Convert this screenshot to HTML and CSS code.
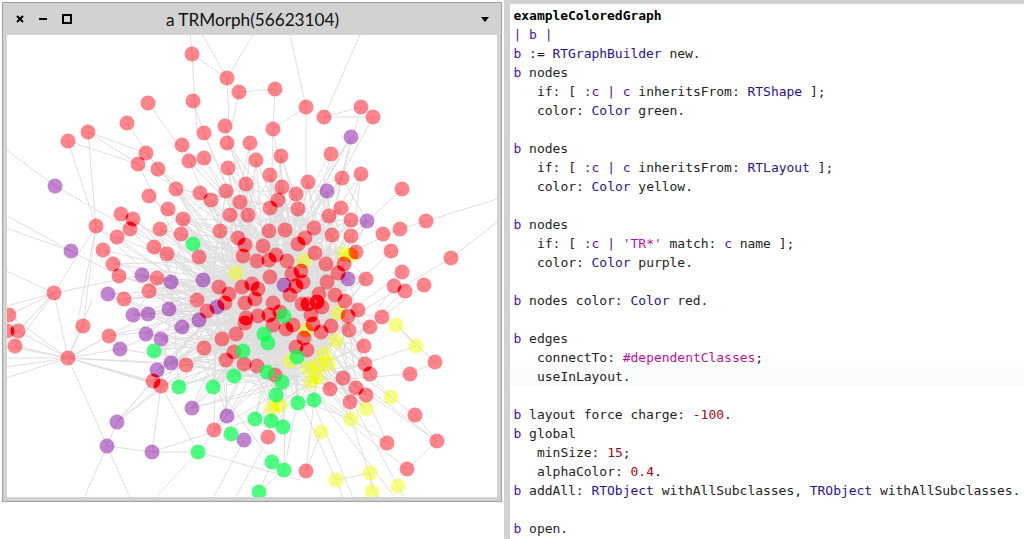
FILE: index.html
```html
<!DOCTYPE html>
<html lang="en">
<head>
<meta charset="utf-8">
<title>exampleColoredGraph</title>
<link rel="stylesheet" href="styles.css">
</head>
<body>
<div class="desk">
  <section class="window">
    <header class="titlebar">
      <div class="controls">
        <svg class="ctl" width="8" height="8" viewBox="0 0 8 8"><path d="M1 1L7 7M7 1L1 7" stroke="#000" stroke-width="2" fill="none"/></svg>
        <svg class="ctl" width="8" height="8" viewBox="0 0 8 8"><path d="M0 4H8" stroke="#000" stroke-width="2" fill="none"/></svg>
        <svg class="ctl" width="10" height="10" viewBox="0 0 10 10"><rect x="1" y="1" width="8" height="8" stroke="#000" stroke-width="2" fill="none"/></svg>
      </div>
      <div class="title">a TRMorph(56623104)</div>
      <div class="menu"><svg width="8" height="5" viewBox="0 0 8 5"><path d="M0 0H8L4 5Z" fill="#000"/></svg></div>
    </header>
    <div class="canvas">
      <svg id="graph" class="graph" width="490" height="462" viewBox="7 35 490 462">
        <defs>
          <filter id="overlap" filterUnits="userSpaceOnUse" x="7" y="35" width="490" height="462" color-interpolation-filters="sRGB">
            <feComponentTransfer><feFuncA type="table" tableValues="0 0.24 0.48 1 1"/></feComponentTransfer>
          </filter>
        </defs>
      </svg>
    </div>
  </section>
  <section class="pane">
    <div class="topband"></div>
    <div class="code">
      <div class="ln"><b>exampleColoredGraph</b></div>
      <div class="ln v">| b |</div>
      <div class="ln"><span class="v">b</span><span> := </span><span class="k">RTGraphBuilder</span><span> new.</span></div>
      <div class="ln"><span class="v">b</span><span> nodes</span></div>
      <div class="ln in"><span>if: [ </span><span class="v">:c | c</span><span> inheritsFrom: </span><span class="k">RTShape</span><span> ];</span></div>
      <div class="ln in"><span>color: </span><span class="k">Color</span><span> green.</span></div>
      <div class="ln"></div>
      <div class="ln"><span class="v">b</span><span> nodes</span></div>
      <div class="ln in"><span>if: [ </span><span class="v">:c | c</span><span> inheritsFrom: </span><span class="k">RTLayout</span><span> ];</span></div>
      <div class="ln in"><span>color: </span><span class="k">Color</span><span> yellow.</span></div>
      <div class="ln"></div>
      <div class="ln"><span class="v">b</span><span> nodes</span></div>
      <div class="ln in"><span>if: [ </span><span class="v">:c |</span><span> </span><span class="s">'TR*'</span><span> match: </span><span class="v">c</span><span> name ];</span></div>
      <div class="ln in"><span>color: </span><span class="k">Color</span><span> purple.</span></div>
      <div class="ln"></div>
      <div class="ln"><span class="v">b</span><span> nodes color: </span><span class="k">Color</span><span> red.</span></div>
      <div class="ln"></div>
      <div class="ln"><span class="v">b</span><span> edges</span></div>
      <div class="ln in"><span>connectTo: </span><span class="s">#dependentClasses</span><span>;</span></div>
      <div class="ln in cur">useInLayout.</div>
      <div class="ln"></div>
      <div class="ln"><span class="v">b</span><span> layout force charge: </span><span class="n">-100</span><span>.</span></div>
      <div class="ln"><span class="v">b</span><span> global</span></div>
      <div class="ln in"><span>minSize: </span><span class="n">15</span><span>;</span></div>
      <div class="ln in"><span>alphaColor: </span><span class="n">0.4</span><span>.</span></div>
      <div class="ln"><span class="v">b</span><span> addAll: </span><span class="k">RTObject</span><span> withAllSubclasses, </span><span class="k">TRObject</span><span> withAllSubclasses.</span></div>
      <div class="ln"></div>
      <div class="ln"><span class="v">b</span><span> open.</span></div>
    </div>
  </section>
</div>
<script src="graph.js"></script>
</body>
</html>
```
FILE: styles.css
```css
html, body { margin: 0; padding: 0; background: #fff; }
body { width: 1024px; height: 539px; overflow: hidden; }
.desk { display: flex; align-items: flex-start; height: 539px; padding: 2px 0 0 2px; box-sizing: border-box; }
.window { width: 500px; height: 500px; box-sizing: border-box; border: 1px solid #a0a0a0; background: #d2d2d2; padding: 0 4px 4px 4px; display: flex; flex-direction: column; flex: none; }
.titlebar { height: 32px; display: grid; grid-template-columns: 1fr auto 1fr; align-items: center; margin: 0 -4px; padding: 0 12px 0 13px; }
.controls { display: flex; align-items: center; gap: 15px; }
.ctl { display: block; }
.title { font: 17.2px "Lato", "Noto Sans", sans-serif; color: #111; white-space: nowrap; }
.menu { display: flex; justify-content: flex-end; }
.menu svg { display: block; }
.canvas { flex: 1; background: #fff; overflow: hidden; }
.graph { display: block; }
.edges { stroke: #dfdfdf; stroke-width: 1; fill: none; }
.nodes { filter: url(#overlap); }
.red { fill: rgb(255, 0, 16); fill-opacity: .5; }
.purple { fill: rgb(128, 0, 160); fill-opacity: .5; }
.yellow { fill: rgb(240, 255, 0); fill-opacity: .5; }
.green { fill: rgb(0, 255, 74); fill-opacity: .7; }
.pane { flex: 1; margin: -2px 0 0 2px; height: 539px; border-left: 6px solid #d2d2d2; display: flex; flex-direction: column; }
.topband { height: 4px; background: #d2d2d2; flex: none; }
.code { padding-top: 2px; font: 13px/19px "DejaVu Sans Mono", "Liberation Mono", monospace; letter-spacing: -0.03px; color: #222; flex: 1; }
.ln { height: 19px; padding-left: 3.5px; white-space: pre; }
.in { padding-left: 27px; }
.code b { color: #000; }
.v { color: #4a10b0; }
.k { color: #2c0f98; }
.s { color: #c0109a; }
.n { color: #a00a20; }
.cur { background: #fafbfd; }
```
FILE: graph.js
```js
var NS = "http://www.w3.org/2000/svg";
var N = {
 red: [[192,54],[227,78],[239,92],[193,101],[148,103],[127,123],[88,132],[225,126],[204,133],[275,89],[306,107],[324,117],[361,107],[373,117],[273,129],
 [68,141],[146,153],[138,164],[158,169],[182,145],[189,161],[204,158],[227,143],[250,143],[228,168],[176,189],[149,196],[200,193],[211,200],[226,191],[240,202],[246,184],[168,209],[121,214],[133,219],[130,229],[183,219],[160,229],[181,234],[230,215],[248,215],[220,231],[96,226],[117,237],[103,250],[154,247],[167,254],[199,257],[238,238],[245,245],[243,256],[113,264],[119,276],[157,278],[149,291],[219,287],[242,287],[229,294],[197,300],[207,311],[225,303],[245,303],[124,299],[54,293],[9,315],[83,326],[246,318],
 [281,156],[256,160],[331,154],[270,175],[308,182],[282,187],[296,194],[342,178],[361,174],[402,189],[278,200],[270,208],[298,209],[341,208],[329,216],[351,220],[426,221],[400,229],[383,234],[269,231],[285,230],[314,228],[332,235],[351,236],[305,238],[298,244],[263,246],[391,251],[356,252],[315,253],[276,255],[257,261],[269,260],[287,261],[326,264],[451,258],[344,264],[402,272],[292,274],[301,271],[338,273],[366,279],[270,277],[303,282],[327,282],[296,286],[394,286],[405,291],[424,285],[252,284],[258,289],[290,295],[319,294],[335,295],[255,299],[273,303],[317,302],[308,304],[302,304],[345,301],[322,307],[280,312],[358,310],[258,316],[269,315],[311,315],[382,317],[348,316],
 [109,336],[18,331],[7,331],[15,346],[68,358],[153,381],[161,386],[186,365],[204,348],[222,339],[236,334],[226,360],[234,352],[244,364],[214,430],[245,323],
 [273,325],[286,329],[293,325],[313,324],[321,332],[331,326],[349,330],[370,327],[304,338],[296,347],[307,350],[364,346],[365,364],[370,374],[257,366],[343,378],[275,375],[356,388],[330,389],[366,395],[350,402],[410,374],[435,362],[415,415],[437,441],[387,443],[407,469],[268,437],[306,471]],
 purple: [[351,137],[327,191],[367,221],[348,279],[284,285],[55,186],[71,251],[142,275],[171,282],[203,280],[108,294],[133,315],[148,314],[169,309],[217,307],[199,320],[146,334],[161,339],[182,327],[120,349],[157,370],[171,363],[192,408],[227,416],[117,422],[107,446],[152,452],[244,440]],
 yellow: [[236,273],[304,261],[344,254],[351,255],[338,313],[396,325],[416,346],[336,341],[306,330],[324,354],[329,364],[318,365],[290,361],[308,368],[318,377],[311,382],[280,405],[272,408],[391,397],[366,409],[351,419],[321,432],[336,480],[370,473],[398,486],[372,492]],
 green: [[193,244],[284,316],[154,351],[179,387],[213,387],[234,376],[243,351],[231,434],[198,452],[264,334],[268,343],[297,357],[267,372],[282,382],[276,395],[298,403],[314,400],[255,419],[271,421],[283,427],[272,462],[284,470],[259,492]]
};
var E = [
 [192,54,190,30],[192,54,227,78],[227,78,200,30],[227,78,256,30],[227,78,229,125],[239,92,232,126],[192,54,197,132],[193,101,204,133],[289,30,306,107],[362,30,324,117],[324,117,361,107],[324,117,373,117],[361,107,342,178],[373,117,340,178],[275,89,273,129],[275,89,239,92],[306,107,273,129],[306,107,306,182],[148,103,182,150],[127,123,158,169],[88,132,138,164],[351,137,300,230],[351,137,282,240],[361,174,310,250],
 [0,145,55,186],[55,186,130,229],[68,141,96,226],[88,132,96,226],[68,141,138,164],[88,132,146,153],[0,212,71,251],[0,226,71,251],[71,251,119,276],[96,226,75,335],[96,226,83,326],[96,226,54,293],[54,293,0,308],[54,293,142,275],[0,268,54,293],[54,293,68,358],[54,293,9,315],[54,293,18,331],[54,293,15,346],[54,293,0,350],
 [68,358,0,358],[68,358,0,368],[68,358,0,380],[68,358,0,345],[68,358,9,315],[68,358,18,331],[68,358,15,346],[68,358,153,381],[68,358,155,383],[68,358,161,386],[68,358,120,349],[68,358,146,316],[68,358,83,326],[68,358,109,336],[68,358,92,300],[68,358,107,446],[68,358,171,363],[68,358,186,365],
 [107,446,117,422],[107,446,83,500],[107,446,131,500],[107,446,152,452],[152,452,198,452],[117,422,153,381],[117,422,161,386],[153,500,198,452],[198,452,161,386],[198,452,227,416],[152,452,161,386],[152,452,250,420],[198,452,300,480],[192,408,270,390],[212,500,244,440],[234,500,262,450],[259,492,284,470],[259,492,272,462],[272,462,198,360],[284,470,285,427],[306,471,321,432],[306,471,314,400],[284,470,297,403],
 [497,199,426,221],[426,221,400,229],[400,229,330,262],[497,222,451,258],[451,258,330,330],[402,189,351,236],[367,221,342,178],[367,221,383,234],[437,441,415,415],[437,441,407,469],[437,441,340,375],[437,441,345,372],[415,415,340,360],[435,362,410,374],[435,362,396,325],[410,374,335,380],[407,469,320,400],[387,443,351,419],[387,443,366,395],[398,486,340,380],[405,500,398,486],[372,492,370,473],[336,480,370,473],[336,480,300,400],[344,500,336,480],[354,500,312,400],[378,500,351,419],[397,500,320,400],[416,346,340,372],[416,346,396,325],[396,325,435,362],[391,397,340,340],[394,286,356,340],[405,291,350,340],[424,285,345,345],[402,272,340,320],[391,251,350,290],[382,317,340,310]
];
var svg = document.getElementById("graph");
var edges = document.createElementNS(NS, "path");
edges.setAttribute("class", "edges");
var all = [].concat(N.red, N.purple, N.yellow, N.green);
var core = all.filter(function (p) { return Math.hypot(p[0] - 280, p[1] - 320) < 75; });
var mid = all.filter(function (p) { return Math.hypot(p[0] - 260, p[1] - 290) < 120; });
var seed = 12345;
function rnd(n) { seed = (seed * 1103515 + 12345) % 2147483647; return seed % n; }
var d = "";
E.forEach(function (e) { d += "M" + e[0] + " " + e[1] + "L" + e[2] + " " + e[3]; });
all.forEach(function (p) {
  var r = Math.hypot(p[0] - 270, p[1] - 300);
  if (p[0] > 370 || p[1] > 430 || p[1] < 125 || p[0] < 90) return;
  var count = r < 90 ? 6 : r < 150 ? 5 : 2;
  for (var i = 0; i < count; i++) {
    var pool = i % 3 === 2 ? mid : core;
    var q = pool[rnd(pool.length)];
    d += "M" + p[0] + " " + p[1] + "L" + q[0] + " " + q[1];
  }
});
edges.setAttribute("d", d);
svg.appendChild(edges);
function layer(names, withFilter) {
  var g = document.createElementNS(NS, "g");
  if (withFilter) g.setAttribute("class", "nodes");
  names.forEach(function (name) {
    N[name].forEach(function (p) {
      var c = document.createElementNS(NS, "circle");
      c.setAttribute("cx", p[0]); c.setAttribute("cy", p[1]); c.setAttribute("r", 7.5);
      c.setAttribute("class", name);
      g.appendChild(c);
    });
  });
  svg.appendChild(g);
}
layer(["yellow", "purple", "red"], true);
layer(["green"], false);
```
